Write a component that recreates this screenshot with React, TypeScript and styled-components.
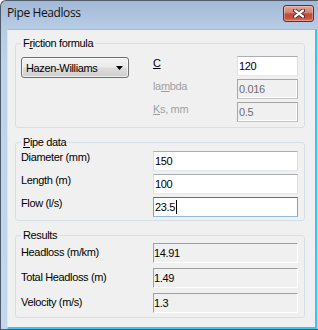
import React from 'react';
import styled, { createGlobalStyle, css } from 'styled-components';

const Global = createGlobalStyle`
  html, body { margin: 0; padding: 0; background: #ffffff; }
  body { width: 318px; height: 330px; overflow: hidden; }
  * { box-sizing: border-box; }
`;

const uiFont = `"Liberation Sans", Arial, sans-serif`;

const Window = styled.div`
  width: 318px;
  height: 330px;
  display: flex;
  flex-direction: column;
  border: 1px solid #4f5b6b;
  border-right: none;
  border-radius: 6px 0 0 0;
  background: linear-gradient(to bottom, #a3b9d5 0px, #b6cbe4 26px, #bed3ea 60px, #c3d7ed 100%);
  overflow: hidden;
`;

const TitleBar = styled.div`
  flex: none;
  height: 28px;
  display: flex;
  align-items: flex-start;
  justify-content: space-between;
  padding: 4px 4px 0 6px;
`;

const Title = styled.div`
  font-family: "Open Sans", "Noto Sans", sans-serif;
  font-size: 12px;
  line-height: 16px;
  letter-spacing: -0.4px;
  color: #111111;
`;

const CloseButton = styled.div`
  width: 31px;
  height: 17px;
  border: 1px solid #6b2a22;
  border-radius: 3px;
  background: linear-gradient(to bottom, #e6a597 0%, #d67f70 45%, #c24b3a 52%, #c4503e 78%, #d9765c 100%);
  box-shadow: inset 0 0 0 1px rgba(255, 255, 255, 0.3);
  display: flex;
  align-items: center;
  justify-content: center;
`;

const Frame = styled.div`
  flex: 1;
  display: flex;
  min-height: 0;
  padding: 0 1px 0 6px;
`;

const Client = styled.div`
  flex: 1;
  display: flex;
  flex-direction: column;
  gap: 7px;
  background: #f0f0f0;
  border-left: 1px solid #dce6f2;
  border-top: 1px solid #a7bad0;
  border-right: 2px solid #3ec3ef;
  border-bottom: 2px solid #3ec3ef;
  padding: 6px 10px 0 7px;
  font-family: ${uiFont};
  font-size: 11px;
  letter-spacing: -0.35px;
  color: #000000;
`;

const Group = styled.fieldset<{ $pt: number; $pb: number }>`
  margin: 0;
  min-width: 0;
  border: 1px solid #d5dfe5;
  border-radius: 3px;
  padding: ${(p) => p.$pt}px 6px ${(p) => p.$pb}px 5px;
`;

const Legend = styled.legend`
  padding: 0 2px;
  margin: 0;
  line-height: 14px;
  font-size: 11px;
`;

const Accel = styled.span`
  text-decoration: underline;
  text-underline-offset: 1px;
`;

const FormulaGrid = styled.div`
  display: grid;
  grid-template-columns: 132px 84px 61px;
  grid-auto-rows: 20px;
  row-gap: 3px;
`;

const FieldGrid = styled.div<{ $gap: number }>`
  display: grid;
  grid-template-columns: 132px 145px;
  grid-auto-rows: 20px;
  row-gap: ${(p) => p.$gap}px;
`;

const Label = styled.div<{ $top: number; $disabled?: boolean }>`
  align-self: start;
  line-height: 14px;
  margin-top: ${(p) => p.$top}px;
  white-space: nowrap;
  color: ${(p) => (p.$disabled ? '#a0a0a0' : '#000000')};
`;

const Combo = styled.div`
  grid-row: 1;
  grid-column: 1;
  align-self: start;
  width: 108px;
  height: 21px;
  margin-top: 1px;
  border: 1px solid #707070;
  border-radius: 3px;
  background: linear-gradient(to bottom, #f3f3f3 0%, #ebebeb 48%, #dddddd 52%, #cfcfcf 100%);
  box-shadow: inset 0 0 0 1px rgba(255, 255, 255, 0.6);
  display: flex;
  align-items: center;
  justify-content: space-between;
  padding: 0 5px 0 4px;
  line-height: 14px;
  white-space: nowrap;
`;

type Variant = 'edit' | 'focus' | 'disabled' | 'static';

const variants: Record<Variant, ReturnType<typeof css>> = {
  edit: css`
    background: #ffffff;
    border: 1px solid;
    border-color: #abadb3 #dbdfe6 #e3e9ef #dbdfe6;
    padding: 0 1px;
  `,
  focus: css`
    background: #ffffff;
    border: 1px solid;
    border-color: #3d7bad #6ea3d2 #8dbbe2 #6ea3d2;
    padding: 0 1px;
  `,
  disabled: css`
    background: #f0f0f0;
    border: 1px solid;
    border-color: #a6a6a6 #b4b4b4 #c4c4c4 #a6a6a6;
    box-shadow: inset -1px -1px 0 #ffffff;
    color: #6d6d6d;
    padding: 0 1px;
  `,
  static: css`
    background: transparent;
    border: 1px solid;
    border-color: #a0a0a0 #ffffff #ffffff #a0a0a0;
    padding: 0;
  `,
};

const TextBox = styled.div<{ $variant: Variant }>`
  height: 20px;
  display: flex;
  align-items: center;
  line-height: 14px;
  white-space: nowrap;
  ${(p) => variants[p.$variant]}
`;

const Caret = styled.span`
  display: inline-block;
  width: 1px;
  height: 14px;
  margin-left: 1px;
  background: #000000;
`;

const CloseGlyph = () => (
  <svg width="12" height="9" viewBox="0 0 12 9">
    <path d="M2 1.5 L10 7.5 M10 1.5 L2 7.5" stroke="#3a2020" strokeWidth="4" strokeLinecap="round" fill="none" />
    <path d="M2 1.5 L10 7.5 M10 1.5 L2 7.5" stroke="#ffffff" strokeWidth="2.2" strokeLinecap="round" fill="none" />
  </svg>
);

const DownArrow = () => (
  <svg width="7" height="4" viewBox="0 0 7 4">
    <path d="M0 0 H7 L3.5 4 Z" fill="#000000" />
  </svg>
);

export default function App() {
  return (
    <>
      <Global />
      <Window>
        <TitleBar>
          <Title>Pipe Headloss</Title>
          <CloseButton>
            <CloseGlyph />
          </CloseButton>
        </TitleBar>
        <Frame>
          <Client>
            <Group $pt={6} $pb={5}>
              <Legend>
                F<Accel>r</Accel>iction formula
              </Legend>
              <FormulaGrid>
                <Combo>
                  <span>Hazen-Williams</span>
                  <DownArrow />
                </Combo>
                <Label $top={0} style={{ gridColumn: 2, gridRow: 1 }}>
                  <Accel>C</Accel>
                </Label>
                <TextBox $variant="edit" style={{ gridColumn: 3, gridRow: 1 }}>
                  120
                </TextBox>
                <Label $top={0} $disabled style={{ gridColumn: 2, gridRow: 2 }}>
                  la<Accel>m</Accel>bda
                </Label>
                <TextBox $variant="disabled" style={{ gridColumn: 3, gridRow: 2 }}>
                  0.016
                </TextBox>
                <Label $top={0} $disabled style={{ gridColumn: 2, gridRow: 3 }}>
                  <Accel>K</Accel>s, mm
                </Label>
                <TextBox $variant="disabled" style={{ gridColumn: 3, gridRow: 3 }}>
                  0.5
                </TextBox>
              </FormulaGrid>
            </Group>

            <Group $pt={2} $pb={3}>
              <Legend>
                <Accel>P</Accel>ipe data
              </Legend>
              <FieldGrid $gap={3}>
                <Label $top={-1.5}>Diameter (mm)</Label>
                <TextBox $variant="edit">150</TextBox>
                <Label $top={-1.5}>Length (m)</Label>
                <TextBox $variant="edit">100</TextBox>
                <Label $top={-1.5}>Flow (l/s)</Label>
                <TextBox $variant="focus">
                  23.5
                  <Caret />
                </TextBox>
              </FieldGrid>
            </Group>

            <Group $pt={1} $pb={4}>
              <Legend>Results</Legend>
              <FieldGrid $gap={5}>
                <Label $top={2}>Headloss (m/km)</Label>
                <TextBox $variant="static">14.91</TextBox>
                <Label $top={2}>Total Headloss (m)</Label>
                <TextBox $variant="static">1.49</TextBox>
                <Label $top={2}>Velocity (m/s)</Label>
                <TextBox $variant="static">1.3</TextBox>
              </FieldGrid>
            </Group>
          </Client>
        </Frame>
      </Window>
    </>
  );
}
